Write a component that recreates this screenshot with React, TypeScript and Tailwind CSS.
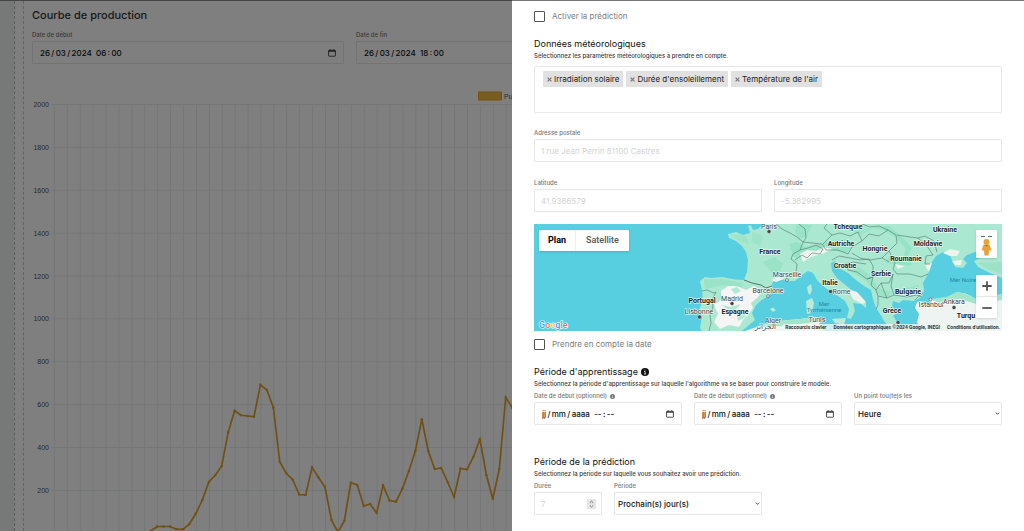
import type { ReactNode } from "react";

const CURVE = [
  531, 526.5, 526.5, 526.5, 529.3, 529.3, 524, 513.5, 500, 482, 475.3, 466, 432.5, 410.7, 415.3, 416, 416.7,
  384.8, 390, 407.5, 462, 473.3, 479.7, 494.5, 495, 467.3, 477.5, 487, 520, 532, 521, 482.6, 485, 506, 504, 513,
  485.5, 500.6, 501.7, 488.5, 471, 451, 419.2, 451, 469, 468, 482, 497, 468.5, 469.5, 456.7, 439.3, 475, 499,
  469, 397.5, 407.5, 430, 452, 470,
];
const curveX = (i: number) => 150.7 + i * 6.455;

const START = "26\u2009/\u200903\u2009/\u20092024  06\u2009:\u200900";
const END = "26\u2009/\u200903\u2009/\u20092024  18\u2009:\u200900";
const EMPTY = "jj\u2009/\u2009mm\u2009/\u2009aaaa  --\u2009:\u2009--";

function CalendarIcon() {
  return (
    <svg viewBox="0 0 8 8" className="size-2" fill="none" stroke="currentColor" strokeWidth="0.8">
      <rect x="0.6" y="1.3" width="6.8" height="5.9" rx="0.5" />
      <path d="M0.6 2.1H7.4" strokeWidth="1.1" />
      <path d="M2.2 0.3V1.5M5.8 0.3V1.5" />
    </svg>
  );
}

function InfoDot({ className }: { className: string }) {
  return (
    <svg viewBox="0 0 16 16" className={className}>
      <circle cx="8" cy="8" r="8" fill="currentColor" />
      <path d="M8 3.2v1.9M6.2 7h2v5M5.8 12h4.6" stroke="#fff" strokeWidth="1.5" fill="none" />
    </svg>
  );
}

function Label({ htmlFor, children }: { htmlFor: string; children: ReactNode }) {
  return (
    <label htmlFor={htmlFor} className="flex items-center gap-[3px] text-[6px] leading-[8px] font-medium text-[#747877]">
      {children}
    </label>
  );
}

const box =
  "block h-[23px] w-full rounded-[1px] border border-[#e6e6e6] bg-white text-[8px] leading-[12px] outline-none";

function DateField({ id, label, value, info }: { id: string; label: string; value: string; info?: boolean }) {
  return (
    <div className="flex min-w-0 flex-col gap-[2px]">
      <Label htmlFor={id}>
        {label}
        {info && <InfoDot className="size-[5px]" />}
      </Label>
      <div className="relative">
        <input
          id={id}
          type="text"
          defaultValue={value}
          className={box + " pr-5 pl-[7px] text-[7px] font-medium whitespace-pre text-[#111]"}
        />
        <button type="button" aria-label="Ouvrir le calendrier" className="absolute inset-y-0 right-2 flex items-center text-[#222]">
          <CalendarIcon />
        </button>
      </div>
    </div>
  );
}

function TextField({ id, label, placeholder }: { id: string; label: string; placeholder: string }) {
  return (
    <div className="flex min-w-0 flex-col gap-[2px]">
      <Label htmlFor={id}>{label}</Label>
      <input id={id} type="text" placeholder={placeholder} className={box + " px-[6px] placeholder:text-[#d3d3d3]"} />
    </div>
  );
}

function SelectField({ id, label, options }: { id: string; label: string; options: string[] }) {
  return (
    <div className="flex min-w-0 flex-col gap-[2px]">
      <Label htmlFor={id}>{label}</Label>
      <div className="relative">
        <select id={id} className={box + " appearance-none pr-3 pl-[3px] font-medium text-[#111]"}>
          {options.map((o) => (
            <option key={o}>{o}</option>
          ))}
        </select>
        <svg viewBox="0 0 6 6" className="pointer-events-none absolute inset-y-0 right-[2px] my-auto size-[5px]">
          <path d="M1 2L3 4L5 2" fill="none" stroke="#222" strokeWidth="1" />
        </svg>
      </div>
    </div>
  );
}

function Check({ id, label }: { id: string; label: string }) {
  return (
    <div className="flex h-[11px] items-center gap-[7px]">
      <input id={id} type="checkbox" className="size-[11px] appearance-none rounded-[1px] border border-[#555] bg-white checked:bg-[#666]" />
      <label htmlFor={id} className="text-[8px] leading-[11px] text-[#7c7c7c]">
        {label}
      </label>
    </div>
  );
}

function SectionTitle({ title, text, info }: { title: string; text: string; info?: boolean }) {
  return (
    <header className="flex flex-col gap-px">
      <h2 className="flex items-center gap-[3px] text-[9px] leading-[14px] font-normal text-[#111]">
        {title}
        {info && <InfoDot className="size-2" />}
      </h2>
      <p className="text-[6px] leading-[8px] font-medium text-[#3a3c3c]">{text}</p>
    </header>
  );
}

function Chart() {
  const points = CURVE.map((y, i) => `${curveX(i)},${y}`).join(" ");
  return (
    <svg className="h-[467px] w-full" role="img" aria-label="Puissance">
      <g transform="translate(-32 -64)">
        {Array.from({ length: 72 }, (_, i) => (
          <path key={i} d={`M${54.4 + i * 12.91} 104.5V531`} stroke="#eaecec" strokeWidth="1" />
        ))}
        {Array.from({ length: 10 }, (_, i) => {
          const y = 104.5 + i * 42.88;
          return (
            <g key={i}>
              <path d={`M51 ${y}H1000`} stroke="#eaecec" strokeWidth="1" />
              <text x="49" y={y + 2.5} textAnchor="end" fontSize="7" fill="#555" className="font-['Liberation_Sans',sans-serif]">
                {2000 - i * 200}
              </text>
            </g>
          );
        })}
        <rect x="478.5" y="92" width="23" height="8" fill="#f2b83f" stroke="#e5a62c" />
        <text x="504" y="98.5" fontSize="7" fill="#555" className="font-['Liberation_Sans',sans-serif]">
          Puissance
        </text>
        <polyline points={points} fill="none" stroke="#dea22d" strokeWidth="1.7" />
        {CURVE.map((y, i) => (
          <circle key={i} cx={curveX(i)} cy={y} r="1.2" fill="#dea22d" />
        ))}
      </g>
    </svg>
  );
}

const COUNTRIES: [number, number, string][] = [
  [770, 254, "France"],
  [841, 246, "Autriche"],
  [848, 229, "Tchéquie"],
  [875, 251, "Hongrie"],
  [928, 245.5, "Moldavie"],
  [945, 232, "Ukraine"],
  [906, 261, "Roumanie"],
  [845, 267.5, "Croatie"],
  [881, 276, "Serbie"],
  [830, 285, "Italie"],
  [908, 293.5, "Bulgarie"],
  [702, 302.5, "Portugal"],
  [735, 313.5, "Espagne"],
  [892, 313, "Grèce"],
  [966, 317.5, "Turqu"],
];
const CITIES: [number, number, string][] = [
  [769, 228.5, "Paris"],
  [787, 277, "Marseille"],
  [768, 293, "Barcelone"],
  [732, 300.5, "Madrid"],
  [699, 313.5, "Lisbonne"],
  [841.5, 294, "Rome"],
  [773, 322.5, "Alger"],
  [765, 329, "الجزائر"],
  [817, 322, "Tunis"],
  [931, 306.5, "Istanbul"],
  [954, 304, "Ankara"],
];

function MapDrawing() {
  return (
    <svg
      viewBox="534 224 468 107"
      preserveAspectRatio="xMidYMid slice"
      className="h-full w-full bg-[#57cfe1] font-['Roboto',sans-serif]"
      role="img"
      aria-label="Carte de l'Europe"
    >
      <path
        fill="#aae8d1"
        d="M763 224L758 229L753 230L751 225.500L748 225.500L750 233L743 235L736 232L728 234L729 238L736 241L742 246L746 252L748 260L747 272L744 280L735 279.500L722 277L711 278L705 277L700 281L702 290L703 300L699 310L702 317L700 328L702 331L742 331L749 325L755 320L752 313L756 305L763 299L769 296L773 290L772 284L775 278.500L780 277L786 281L795 281L802 275L808 271L813 273L817 280L823 286L830 291L838 296L845 301L849 309L847 318L851 319L855 311L853 303L861 304L866 308L866 303L857 296L849 288L843 283L837 278L832 271L831 263L835 261L839 268L848 273L856 280L864 286L871 290L873 299L876 308L880 314L884 321L890 328L896 330L897 322L893 316L897 313L892 306L893 301L899 303L903 300L914 301L922 297L924 290L923 283L928 274L930 265L936 256L943 252L950 255L952 260L955 267L963 268L967 263L963 259L967 255L975 252L983 250L982 257L974 261L978 267L990 273L1002 278V224Z"
      />
      <path fill="#eef4f1" d="M917 302L925 301L935 299L947 297L957 292L967 294L976 299L990 298L1002 294V331H922L917 322L919 314L915 308Z" />
      <path fill="#a3e5cb" d="M930 299L947 297L957 292L967 294L976 299L1002 294V300L976 304L960 299L940 303Z" />
      <path fill="#eef4f1" d="M745 331L762 325L779 321L800 319L815 317L820 320L819 326L824 331Z" />
      <path fill="#a3e5cb" d="M757 327L779 321L800 319L815 317L819 322L800 324L780 326Z" />
      <path fill="#b9ebd8" d="M807 287L811 284L812 290L810 295L808 293ZM806 301L812 298L814 303L812 313L807 314ZM770 309L773 307.500L776 310L773 312ZM832 319L846 318L844 325L835 323ZM889 330L910 328L914 331H889Z" />
      <path
        fill="#f4f5f4"
        d="M721 291L728 286L737 286L746 290L754 286L763 291L757 298L751 303L753 308L748 315L743 320L739 327L729 325L720 329L714 322L718 314L714 305L721 300Z"
      />
      <path fill="#aee9d3" d="M731 289L737 287L741 291L735 294ZM722 305L731 307L740 304L735 311L728 310ZM737 316L744 313L746 317L738 321Z" />
      <g fill="#8ddfbf">
        <path d="M789 244L797 242L806 247L819 244L835 240L846 239L854 246L846 253L826 249L812 252L800 258L794 257Z" opacity="0.7" />
        <path d="M872 228L884 230L897 238L906 249L903 257L889 256L886 262L897 266L912 265L907 257L912 248L901 236L889 226Z" opacity="0.7" />
        <path d="M763 262L775 257L783 264L778 275L769 270ZM797 224L812 225L807 236L799 239L795 232ZM704 279L722 279L743 283L742 287L724 285L705 289ZM842 263L856 265L870 275L878 288L892 292L887 299L876 293L866 281L850 271ZM978 263L1002 262V274L989 270ZM904 289L918 285L920 293L908 295Z" opacity="0.55" />
        <path d="M730 234L746 236L749 244L740 241ZM752 232L763 236L760 246L752 242ZM848 230L862 226L872 229L861 235Z" opacity="0.45" />
      </g>
      <g fill="#edf4f0">
        <path d="M800 254L807 250L816 251L824 247L833 249L822 254L811 257L803 262ZM943 253L950 249L960 251L957 256L950 256ZM952 261L962 260L961 265L955 265ZM848 289L857 292L866 302L862 304L853 299ZM771 280L779 276L784 279L776 282ZM895 264L905 266L898 269ZM925 265L932 263L929 272Z" />
      </g>
      <path fill="#57cfe1" d="M921 302L928 300L932 303L925 305Z" />
      <g fill="none" stroke="#52756d" strokeWidth="0.6" strokeLinejoin="round">
        <path d="M744 280L752 283L761 285L766 288L772 286" strokeWidth="1" />
        <path d="M702 291L707 290L714 293L716 292L712 300L713 307L710 315L711 323L709 331" />
        <path d="M776 224L782 229L790 233L797 237L803 242L800 250L793 254L791 259L797 264L796 273L800 276" />
        <path d="M800 250L808 248L816 245L823 249L820 254L812 253L807 258L802 255L795 260" />
        <path d="M803 242L812 243L822 244L826 250L838 250L848 254L852 247L862 241L858 232L850 236L840 233L832 235L823 244" />
        <path d="M799 224L805 229L806 238L803 242M832 235L824 228L827 224M862 241L869 234L879 236L888 230L896 235L897 243L889 251L882 258L870 260L860 258L852 253" />
        <path d="M832 260L839 256L850 258L860 260L869 259L873 266L873 277L867 279L857 272L848 270L845 264L853 262L866 264" />
        <path d="M889 251L895 263L893 269L897 274L910 274L921 277L928 274M873 277L871 285L876 290L881 283L889 283L893 274M876 290L878 296L887 298L894 295L907 297L917 295L922 297M878 296L878 305L876 309M867 279L873 277M881 283L884 291L887 298M893 274L891 286L894 295" />
        <path d="M897 235L910 237L918 238L927 246L933 255L926 256L925 264L930 264M918 238L925 236L934 241L937 252M882 258L889 262M862 224L870 227L879 226L888 230" />
        <path d="M915 300L919 296L923 293" />
      </g>
      <g stroke="#fff" strokeWidth="1.3" strokeLinejoin="round" paintOrder="stroke" textAnchor="middle">
        <g fontSize="7" fill="#444">
          {CITIES.map(([x, y, name]) => (
            <text key={name} x={x} y={y} strokeOpacity="0.75">
              {name}
            </text>
          ))}
        </g>
        <g fontSize="7" fill="#222" fontWeight="700">
          {COUNTRIES.map(([x, y, name]) => (
            <text key={name} x={x} y={y} strokeOpacity="0.8">
              {name}
            </text>
          ))}
        </g>
      </g>
      <g fontSize="6" fill="#2089a3" textAnchor="middle">
        <text x="824" y="305.500">Mer</text>
        <text x="824" y="311.500">Tyrrhénienne</text>
        <text x="963" y="281.500">Mer Noire</text>
      </g>
      <g fill="#444" stroke="#fff" strokeWidth="0.4">
        <circle cx="769" cy="231.500" r="2" />
        <circle cx="732" cy="303.500" r="2" />
        <circle cx="699.500" cy="317" r="2" />
        <circle cx="830.500" cy="291.500" r="2" />
        <circle cx="954" cy="307.500" r="2" />
        <circle cx="898" cy="322.500" r="2" />
      </g>
      <g fill="#fff" stroke="#555" strokeWidth="0.700">
        <circle cx="787" cy="280" r="1.400" />
        <circle cx="768" cy="296" r="1.400" />
        <circle cx="930.500" cy="299.500" r="1.400" />
      </g>
    </svg>
  );
}

function MapView() {
  return (
    <div className="relative h-[107px] overflow-hidden font-['Roboto',sans-serif]">
      <MapDrawing />
      <div className="absolute top-[6px] left-[5px] flex h-[21px] rounded-[1px] bg-white text-[9px] shadow-sm">
        <button type="button" className="border-r border-[#eee] px-[9px] font-bold text-black">
          Plan
        </button>
        <button type="button" className="px-[10px] font-medium text-[#555]">
          Satellite
        </button>
      </div>
      <button
        type="button"
        aria-label="Street View"
        className="absolute top-[6px] right-[5px] flex h-[28px] w-[21px] justify-center rounded-[1px] bg-white shadow-sm"
      >
        <svg viewBox="0 0 21 28" className="h-full w-full">
          <path d="M5 6.500H9M12 6.500H16" stroke="#666" strokeWidth="1" />
          <circle cx="10.500" cy="12" r="3" fill="#e9a13b" />
          <path d="M7.500 14.500H13.500L15.500 20.500H13L12.500 25.500H8.500L8 20.500H5.500Z" fill="#e9a13b" />
          <path d="M8.500 15H12.500L10.500 16.500Z" fill="#b9741c" />
        </svg>
      </button>
      <div className="absolute top-[51px] right-[5px] flex h-[43px] w-[21px] flex-col rounded-[1px] bg-white shadow-sm">
        <button type="button" aria-label="Zoom avant" className="flex flex-1 items-center justify-center border-b border-[#e6e6e6]">
          <svg viewBox="0 0 10 10" className="size-[10px]">
            <path d="M0.300 5H9.700M5 0.300V9.700" stroke="#555" strokeWidth="1.800" />
          </svg>
        </button>
        <button type="button" aria-label="Zoom arrière" className="flex flex-1 items-center justify-center">
          <svg viewBox="0 0 10 10" className="size-[10px]">
            <path d="M0.300 5H9.700" stroke="#555" strokeWidth="1.800" />
          </svg>
        </button>
      </div>
      <svg viewBox="0 0 34 13" className="absolute bottom-0 left-[4px] h-[13px] w-[34px]" aria-label="Google">
        <text x="1" y="10" fontSize="9" fontWeight="500" stroke="#fff" strokeWidth="1.200" paintOrder="stroke" className="font-['Roboto',sans-serif]">
          <tspan fill="#4a9ee8">G</tspan>
          <tspan fill="#ea6a4a">o</tspan>
          <tspan fill="#f2b83f">o</tspan>
          <tspan fill="#4a9ee8">g</tspan>
          <tspan fill="#4fae6a">l</tspan>
          <tspan fill="#ea6a4a">e</tspan>
        </text>
      </svg>
      <div className="absolute right-0 bottom-0 flex h-[7px] gap-[7px] bg-[#eef6f3]/80 px-[2px] text-[5px] leading-[7px] font-bold whitespace-nowrap text-[#333]">
        <button type="button">Raccourcis clavier</button>
        <span>Données cartographiques ©2024 Google, INEGI</span>
        <a href="#conditions">Conditions d'utilisation.</a>
      </div>
    </div>
  );
}

function Tag({ children }: { children: string }) {
  return (
    <li className="flex h-4 items-center gap-[2px] rounded-[1px] bg-[#e0e1e0] px-[4px] text-[8px] leading-[12px] text-[#222]">
      <button type="button" aria-label={"Retirer " + children} className="text-[#777]">
        <svg viewBox="0 0 5 5" className="size-[5px]">
          <path d="M0.600 0.600L4.400 4.400M4.400 0.600L0.600 4.400" stroke="currentColor" strokeWidth="1.200" />
        </svg>
      </button>
      {children}
    </li>
  );
}

export default function App() {
  return (
    <div className="relative h-screen overflow-hidden bg-[#edf3f1] font-['Inter',sans-serif]">
      <main className="flex h-full border-t border-[#888] pl-[14px]">
        <div className="min-w-0 flex-1 border-l border-dashed border-[#b4b8b7] bg-white pl-2">
          <section className="h-full border-l border-dashed border-[#c4c8c7] pt-[6px] pr-4 pl-2">
            <h1 className="text-[11px] leading-[16px] font-medium text-[#333]">Courbe de production</h1>
            <div className="mt-2 grid grid-cols-[312px_312px_1fr] gap-3">
              <DateField id="debut" label="Date de début" value={START} />
              <DateField id="fin" label="Date de fin" value={END} />
            </div>
            <Chart />
          </section>
        </div>
      </main>

      <div className="absolute inset-0 flex justify-end bg-black/50">
        <aside className="w-1/2 overflow-hidden border-t border-[#777] bg-white px-[22px] pt-[10px]">
          <form>
            <Check id="activer" label="Activer la prédiction" />

            <section className="mt-[15px]">
              <SectionTitle
                title="Données météorologiques"
                text="Sélectionnez les paramètres météorologiques à prendre en compte."
              />
              <ul className="mt-[6px] flex h-[47px] items-start gap-[3px] rounded-[1px] border border-[#e6e6e6] px-2 pt-1">
                <Tag>Irradiation solaire</Tag>
                <Tag>Durée d'ensoleillement</Tag>
                <Tag>Température de l'air</Tag>
              </ul>
            </section>

            <div className="mt-4">
              <TextField id="adresse" label="Adresse postale" placeholder="1 rue Jean Perrin 81100 Castres" />
            </div>
            <div className="mt-[17px] grid grid-cols-2 gap-3">
              <TextField id="latitude" label="Latitude" placeholder="41.9366579" />
              <TextField id="longitude" label="Longitude" placeholder="-5.382995" />
            </div>
            <div className="mt-3">
              <MapView />
            </div>

            <div className="mt-2">
              <Check id="date" label="Prendre en compte la date" />
            </div>

            <section className="mt-[15px]">
              <SectionTitle
                title="Période d'apprentissage"
                text="Sélectionnez la période d'apprentissage sur laquelle l'algorithme va se baser pour construire le modèle."
                info
              />
              <div className="mt-1 grid grid-cols-3 gap-3">
                <DateField id="app-debut" label="Date de début (optionnel)" value={EMPTY} info />
                <DateField id="app-fin" label="Date de début (optionnel)" value={EMPTY} info />
                <SelectField id="pas" label="Un point tou(te)s les" options={["Heure", "Jour"]} />
              </div>
            </section>

            <section className="mt-[30px]">
              <SectionTitle
                title="Période de la prédiction"
                text="Sélectionnez la période sur laquelle vous souhaitez avoir une prédiction."
              />
              <div className="mt-1 grid grid-cols-[68px_148px] gap-3">
                <div className="flex flex-col gap-[2px]">
                  <Label htmlFor="duree">Durée</Label>
                  <div className="relative">
                    <input id="duree" type="text" inputMode="numeric" placeholder="7" className={box + " px-[6px] placeholder:text-[#d3d3d3]"} />
                    <button type="button" aria-label="Modifier la durée" className="absolute inset-y-0 right-[6px] my-auto h-[10px] w-[9px] bg-[#e6e6e6]">
                      <svg viewBox="0 0 9 10" className="h-full w-full" fill="none" stroke="#666" strokeWidth="0.900">
                        <path d="M2.800 3.800L4.500 2.200L6.200 3.800M2.800 6.400L4.500 8L6.200 6.400" />
                      </svg>
                    </button>
                  </div>
                </div>
                <SelectField id="periode" label="Période" options={["Prochain(s) jour(s)", "Prochaine(s) heure(s)"]} />
              </div>
            </section>
          </form>
        </aside>
      </div>
    </div>
  );
}
